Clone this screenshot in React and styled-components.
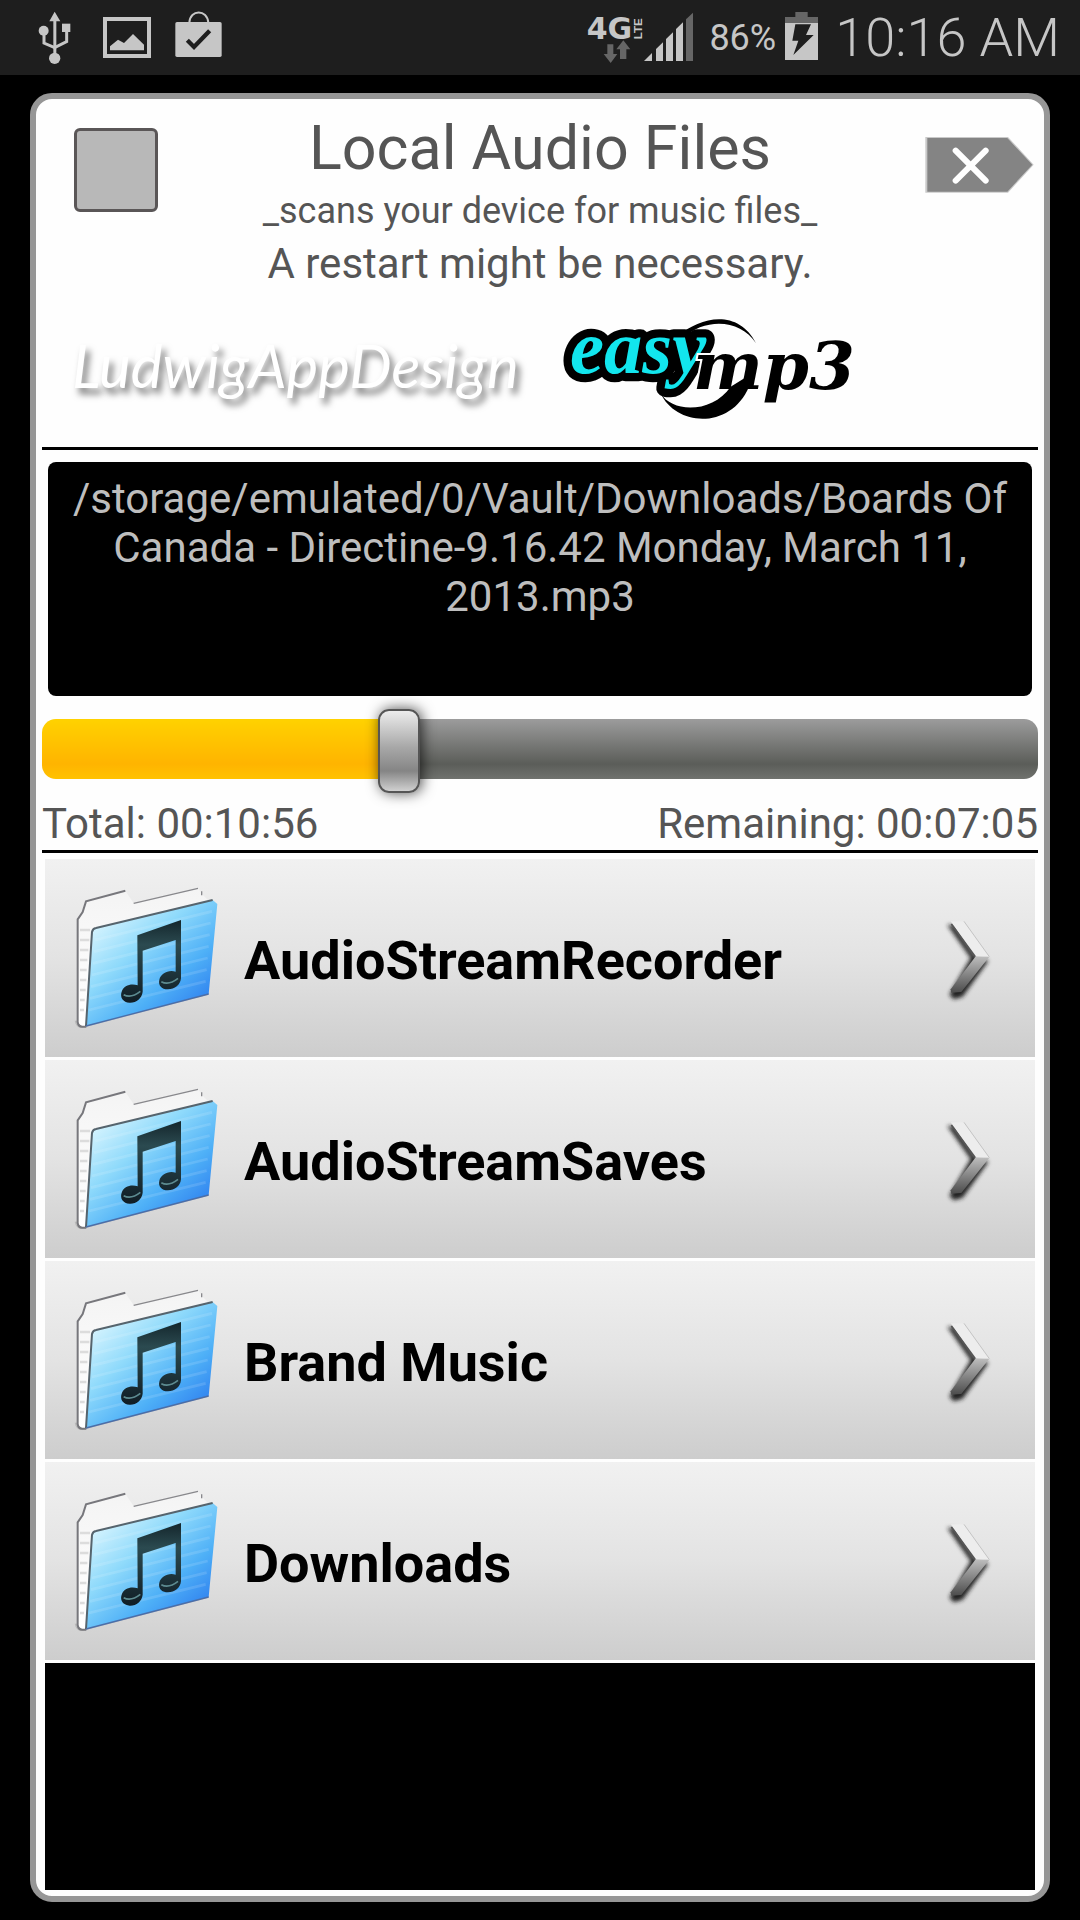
import React, { useState } from 'react';
import styled, { createGlobalStyle } from 'styled-components';

const GlobalStyle = createGlobalStyle`
  * {
    box-sizing: border-box;
  }

  body {
    margin: 0;
    background: #000;
    font-family: Roboto, "Liberation Sans", sans-serif;
  }

  svg {
    flex-shrink: 0;
    overflow: visible;
  }
`;

const Screen = styled.div`
  display: flex;
  flex-direction: column;
  min-height: 100vh;
`;

const StatusBar = styled.header`
  display: flex;
  justify-content: space-between;
  height: 75px;
  padding: 11px 20px 0 38px;
  background: #1e1e1e;
  color: #c6c6c6;
`;

const StatusGroup = styled.div`
  display: flex;
  align-items: flex-start;
  gap: ${(props) => props.$gap || 0}px;
`;

const Battery = styled.span`
  margin: 0 9px 0 15px;
  font-size: 36px;
  line-height: 54px;
`;

const Clock = styled.time`
  margin-left: 17px;
  font-size: 54px;
  font-weight: 300;
  line-height: 54px;
`;

const Card = styled.main`
  display: flex;
  flex: 1;
  flex-direction: column;
  margin: 18px 30px;
  padding: 0 6px 6px;
  border: 6px solid #969696;
  border-radius: 22px;
  background: #fefefe;
`;

const Header = styled.div`
  display: grid;
  grid-template-columns: 148px 1fr 148px;
  align-items: start;
  color: #555;
`;

const RepeatBox = styled.input`
  appearance: none;
  justify-self: center;
  width: 84px;
  height: 84px;
  margin: 29px 0 0;
  border: 3px solid #5a5657;
  border-radius: 6px;
  background: #b8b8b8;
`;

const CloseButton = styled.button`
  justify-self: end;
  display: flex;
  margin: 35px 2px 0 0;
  padding: 0;
  border: none;
  background: none;
  cursor: pointer;
`;

const Titles = styled.div`
  display: grid;
  gap: 7px;
  padding-top: 14px;
  text-align: center;
  white-space: nowrap;
`;

const Title = styled.h1`
  margin: 0;
  font-size: 61px;
  font-weight: 400;
  line-height: 70px;
`;

const Subtitle = styled.p`
  margin: 0;
  font-size: 36px;
  line-height: 42px;
`;

const Notice = styled.p`
  margin: 0;
  font-size: 42px;
  line-height: 49px;
`;

const Logos = styled.div`
  display: flex;
  align-items: flex-start;
  gap: 40px;
  padding: 27px 30px 24px;
`;

const LudwigLogo = styled.span`
  font-family: Lato, sans-serif;
  font-size: 60px;
  font-style: italic;
  line-height: 100px;
  color: #fff;
  text-shadow: 4px 6px 7px rgba(0, 0, 0, 0.55);
`;

const Divider = styled.hr`
  width: 100%;
  height: 3px;
  margin: 0;
  border: none;
  background: #000;
`;

const PathBox = styled.div`
  min-height: 234px;
  margin: 12px 6px 13px;
  padding: 12px 16px;
  border-radius: 8px;
  background: #000;
  color: #bebebe;
  font-size: 42px;
  line-height: 49px;
  text-align: center;
`;

const SeekBar = styled.input`
  appearance: none;
  display: block;
  width: 100%;
  height: 80px;
  margin: 0 0 10px;
  background: none;

  &::-webkit-slider-runnable-track {
    height: 60px;
    border-radius: 14px;
    background:
      linear-gradient(#ffd200, #ffb400 75%, #ffc200) 0 0 / var(--played) 100% no-repeat,
      linear-gradient(#9c9c9c, #5b5d59 75%, #70726e);
  }

  &::-webkit-slider-thumb {
    appearance: none;
    width: 42px;
    height: 84px;
    margin-top: -10px;
    border: 2px solid #555;
    border-radius: 11px;
    background: linear-gradient(#ececec, #a8a8a8 45%, #858585 75%, #d0d0d0);
    box-shadow: 2px 0 14px rgba(0, 0, 0, 0.7);
  }
`;

const Times = styled.div`
  display: flex;
  justify-content: space-between;
  margin-bottom: 2px;
  color: #555;
  font-size: 42px;
  line-height: 49px;
`;

const FolderList = styled.ul`
  display: grid;
  gap: 3px;
  margin: 6px 3px 3px;
  padding: 0;
  list-style: none;
`;

const FolderButton = styled.button`
  display: flex;
  align-items: center;
  gap: 24px;
  width: 100%;
  height: 198px;
  padding: 4px 43px 0 27px;
  border: none;
  background: linear-gradient(#f1f1f1, #e3e3e3 50%, #cdcdcd);
  color: #000;
  font-family: inherit;
  font-size: 54px;
  font-weight: 700;
  text-align: left;
  cursor: pointer;
`;

const FolderName = styled.span`
  flex: 1;
`;

const EmptyArea = styled.div`
  flex: 1;
  margin: 0 3px;
  background: #000;
`;

const UsbIcon = () => (
  <svg width="41" height="54" viewBox="114 33 123 162" fill="#c6c6c6">
    <path d="M164 35l17 29h-12v100h-9V64h-12z" />
    <circle cx="131" cy="92" r="15" />
    <circle cx="164" cy="175" r="17" />
    <path d="M186 71h25v25h-25z" />
    <path d="M132 95v34l32 14 36-18V92" fill="none" stroke="#c6c6c6" strokeWidth="9" />
  </svg>
);

const ImageIcon = () => (
  <svg width="50" height="54" viewBox="306 33 150 162" fill="#c6c6c6">
    <path d="M309 51h144v123H309zM321 63v99h120V63z" fillRule="evenodd" />
    <path d="M330 151v-12l24-20 18 10 27-27 33 32v17z" />
  </svg>
);

const BagIcon = () => (
  <svg width="47" height="54" viewBox="525 33 141 162">
    <path d="M568 68c2-41 54-41 57 0" fill="none" stroke="#c6c6c6" strokeWidth="6" />
    <rect x="526" y="66" width="139" height="105" rx="5" fill="#c6c6c6" />
    <path d="M562 121l20 20 47-49" fill="none" stroke="#1e1e1e" strokeWidth="13" />
  </svg>
);

const NetworkIcon = () => (
  <svg width="56" height="54" viewBox="80 33 168 162">
    <text x="76" y="117" fontFamily="DejaVu Sans" fontWeight="700" fontSize="90" fill="#c6c6c6">4G</text>
    <text
      transform="translate(243 118) rotate(-90)"
      fontFamily="Liberation Sans"
      fontWeight="700"
      fontSize="35"
      fill="#c6c6c6"
    >
      LTE
    </text>
    <path d="M138 133h18v29h12l-20 27-21-27h11zM176 177h19v-29h12l-21-27-21 27h11z" fill="#666" />
  </svg>
);

const SignalIcon = () => (
  <svg width="50" height="54" viewBox="252 33 150 162" fill="#c6c6c6">
    <path d="M252 183l24-24v24zM288 183v-36l21-20v56zM318 183v-66l21-20v86zM348 183V87l21-20v116z" />
    <path d="M378 183V58l21-20v145z" fill="#666" />
  </svg>
);

const BatteryIcon = () => (
  <svg width="33" height="54" viewBox="675 33 99 162">
    <path d="M706 36h37v15h31v19h-99V51h31z" fill="#666" />
    <path d="M675 69h99v111h-99z" fill="#c6c6c6" />
    <path d="M706 73h47l-15 32h23l-61 60 15-43h-18z" fill="#1e1e1e" />
  </svg>
);

const CloseIcon = () => (
  <svg width="114" height="62" viewBox="1086 402 342 186">
    <path d="M1096 411h248l77 83-77 84h-248z" fill="#c9c9c9" />
    <path d="M1102 414h240l75 80-75 81h-240z" fill="#848484" />
    <path d="M1187 452l90 90M1277 452l-90 90" stroke="#fff" strokeWidth="18" strokeLinecap="round" />
  </svg>
);

const EasyMp3Logo = () => (
  <svg width="300" height="108" viewBox="60 75 900 324" role="img" aria-label="easy mp3">
    <path d="M415 140C490 75 600 60 651 160 605 88 500 82 430 145z" />
    <text
      x="93"
      y="248"
      fontFamily="Liberation Serif"
      fontWeight="700"
      fontStyle="italic"
      fontSize="230"
      fill="#12e6ee"
      stroke="#000"
      strokeWidth="50"
      strokeLinejoin="round"
      paintOrder="stroke"
    >
      easy
    </text>
    <text
      x="462"
      y="297"
      fontFamily="DejaVu Serif"
      fontWeight="700"
      fontStyle="italic"
      fontSize="198"
      stroke="#fefefe"
      strokeWidth="12"
      paintOrder="stroke"
    >
      mp3
    </text>
    <path d="M365 310C400 370 520 370 575 290L640 250 630 290C575 420 410 410 365 310z" />
  </svg>
);

const FolderIcon = () => (
  <svg width="148" height="150" viewBox="130 105 444 450">
    <defs>
      <linearGradient id="cover" x1="0.1" y1="0" x2="0.9" y2="0.9">
        <stop offset="0" stopColor="#effdff" />
        <stop offset="0.4" stopColor="#8fdafb" />
        <stop offset="0.7" stopColor="#4eb0f7" />
        <stop offset="1" stopColor="#2a79ee" />
      </linearGradient>
      <linearGradient id="note" x1="0" y1="0" x2="0" y2="1">
        <stop offset="0" stopColor="#14262c" />
        <stop offset="0.3" stopColor="#2b4a50" />
        <stop offset="1" stopColor="#101d25" />
      </linearGradient>
      <linearGradient id="paper" x1="0" y1="0" x2="0" y2="1">
        <stop offset="0" stopColor="#f4f4f4" />
        <stop offset="1" stopColor="#fff" />
      </linearGradient>
    </defs>
    <path d="M138 512q4 22 22 22l380-100-12-14-350 90z" fill="#888" opacity="0.35" />
    <path
      d="M147 206L160 186 170 154 290 122 315 160 508 114 522 134 540 152 200 234 172 528 158 530 147 518z"
      fill="url(#paper)"
    />
    <path d="M290 122L172 154 162 186 147 208V516q2 14 14 14h12" fill="none" stroke="#77777c" strokeWidth="6" />
    <path d="M315 160L508 115M519 124v12" fill="none" stroke="#88888c" strokeWidth="4" />
    <path
      d="M154 240h30M154 270h28M154 300h25M154 330h22M154 360h20M154 390h19M154 420h17M154 450h14M154 480h12"
      stroke="#dcdcdc"
      strokeWidth="8"
    />
    <path d="M172 528L190 246q2-10 12-12L552 150 566 162 540 432z" fill="url(#cover)" />
    <path
      d="M200 270l350-86M196 305l350-86M193 340l350-86M190 375l350-86M187 410l350-86M184 445l350-86M181 480l350-86"
      stroke="#fff"
      strokeWidth="8"
      opacity="0.12"
    />
    <path d="M172 528L190 246q2-10 12-12L552 150" fill="none" stroke="#56646d" strokeWidth="6" />
    <path d="M172 528L540 432" stroke="#4b6ea8" strokeWidth="4" />
    <path
      d="M326 256L457 210V385C455 405 438 418 418 418 398 418 388 405 392 389 396 370 420 358 441 365V270L342 302V425C340 445 322 459 303 458 283 457 273 442 279 425 285 406 308 399 327 406z"
      fill="url(#note)"
    />
    <path d="M285 434q22 12 50-10M398 395q22 12 50-10" stroke="#5d8b90" strokeWidth="5" fill="none" />
  </svg>
);

const ChevronIcon = () => (
  <svg width="48" height="84" viewBox="254 202 144 252">
    <defs>
      <linearGradient id="arm" x1="0" y1="0" x2="0" y2="1">
        <stop offset="0" stopColor="#bdbdbd" />
        <stop offset="1" stopColor="#4c4c4c" />
      </linearGradient>
      <filter id="soft" x="-30%" y="-30%" width="160%" height="160%">
        <feGaussianBlur stdDeviation="7" />
      </filter>
    </defs>
    <path d="M264 222L285 224 350 318 387 330 310 438 284 446 270 432 334 322z" fill="#222" filter="url(#soft)" />
    <path d="M274 212h40l76 106h-42z" fill="#ededed" />
    <path d="M276 220l72 98" stroke="#555" strokeWidth="5" />
    <path d="M314 212l76 106" stroke="#c4c4c4" strokeWidth="3" />
    <path d="M348 318h42l-84 106-30 2-2-10z" fill="url(#arm)" />
  </svg>
);

const folders = ['AudioStreamRecorder', 'AudioStreamSaves', 'Brand Music', 'Downloads'];

const TOTAL_SECONDS = 656;

function formatTime(seconds) {
  const parts = [Math.floor(seconds / 3600), Math.floor(seconds / 60) % 60, seconds % 60];
  return parts.map((part) => String(part).padStart(2, '0')).join(':');
}

function App() {
  const [position, setPosition] = useState(231);

  return (
    <>
      <GlobalStyle />
      <Screen>
        <StatusBar>
          <StatusGroup $gap={23}>
            <UsbIcon />
            <ImageIcon />
            <BagIcon />
          </StatusGroup>
          <StatusGroup>
            <NetworkIcon />
            <SignalIcon />
            <Battery>86%</Battery>
            <BatteryIcon />
            <Clock>10:16 AM</Clock>
          </StatusGroup>
        </StatusBar>
        <Card>
          <Header>
            <RepeatBox type="checkbox" aria-label="Select" />
            <Titles>
              <Title>Local Audio Files</Title>
              <Subtitle>_scans your device for music files_</Subtitle>
              <Notice>A restart might be necessary.</Notice>
            </Titles>
            <CloseButton type="button" aria-label="Close">
              <CloseIcon />
            </CloseButton>
          </Header>
          <Logos>
            <LudwigLogo>LudwigAppDesign</LudwigLogo>
            <EasyMp3Logo />
          </Logos>
          <Divider />
          <PathBox>
            /storage/emulated/0/Vault/Downloads/Boards Of Canada - Directine-9.16.42 Monday, March 11, 2013.mp3
          </PathBox>
          <SeekBar
            type="range"
            aria-label="Position"
            min="0"
            max={TOTAL_SECONDS}
            value={position}
            style={{ '--played': `${(position / TOTAL_SECONDS) * 100}%` }}
            onChange={(e) => setPosition(Number(e.target.value))}
          />
          <Times>
            <span>Total: {formatTime(TOTAL_SECONDS)}</span>
            <span>Remaining: {formatTime(TOTAL_SECONDS - position)}</span>
          </Times>
          <Divider />
          <FolderList>
            {folders.map((name) => (
              <li key={name}>
                <FolderButton type="button">
                  <FolderIcon />
                  <FolderName>{name}</FolderName>
                  <ChevronIcon />
                </FolderButton>
              </li>
            ))}
          </FolderList>
          <EmptyArea />
        </Card>
      </Screen>
    </>
  );
}

export default App;
